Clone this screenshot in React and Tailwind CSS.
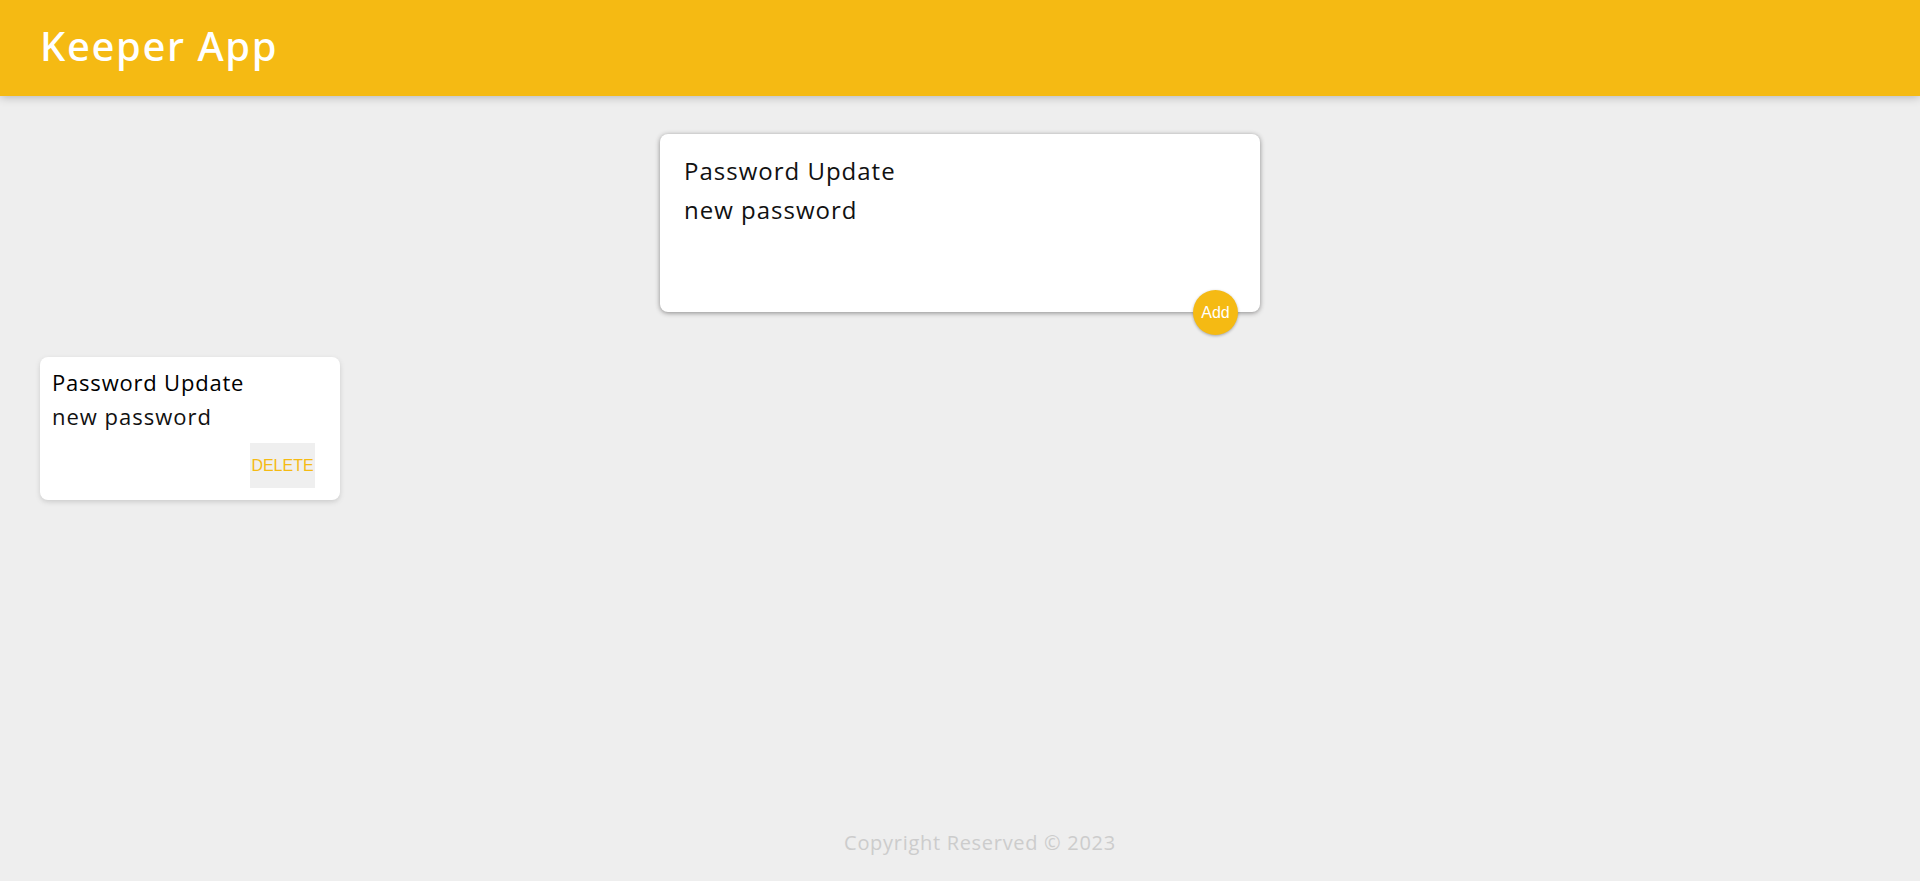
import React from "react";

export default function App() {
  return (
    <div
      className="flex h-[881px] flex-col overflow-hidden bg-[#eeeeee]"
      style={{ fontFamily: '"Open Sans", "Noto Sans", sans-serif' }}
    >
      <header className="relative z-10 h-[96px] shrink-0 bg-[#f5ba13] pl-[40px] pt-[26px] shadow-[0_0_10px_0_rgba(0,0,0,0.3)]">
        <h1
          className="text-[40px] leading-[40px] font-medium tracking-[1.6px] text-white"
          style={{ fontFamily: '"Noto Sans", "Open Sans", sans-serif' }}
        >
          Keeper App
        </h1>
      </header>

      <main className="flex-1">
        <form className="relative mx-auto mt-[38px] h-[178px] w-[600px] rounded-[8px] bg-white pl-[24px] pr-[24px] pt-[17px] shadow-[0_1px_5px_rgb(138,137,137)]">
          <input
            readOnly
            value="Password Update"
            className="block h-[39px] w-full bg-transparent p-0 text-[24px] leading-[39px] font-normal tracking-[1px] text-[#111] outline-none"
          />
          <textarea
            readOnly
            rows={3}
            value="new password"
            className="block h-[100px] w-full resize-none bg-transparent p-0 text-[24px] leading-[39px] font-normal tracking-[1px] text-[#111] outline-none"
          />
          <button
            type="button"
            className="absolute bottom-[-23px] right-[22px] flex h-[45px] w-[45px] items-center justify-center rounded-full bg-[#f5ba13] text-[16px] text-white shadow-[0_1px_3px_rgba(0,0,0,0.3)]"
            style={{ fontFamily: '"Liberation Sans", Arial, sans-serif' }}
          >
            Add
          </button>
        </form>

        <div className="ml-[40px] mt-[45px] flex flex-wrap">
          <div className="flex w-[300px] flex-col rounded-[8px] bg-white px-[12px] pb-[12px] pt-[10px] shadow-[0_2px_5px_#cccccc]">
            <h2 className="text-[22px] leading-[30px] font-medium tracking-[0.8px] text-black">
              Password Update
            </h2>
            <p className="mt-[4px] text-[22px] leading-[30px] font-normal tracking-[1px] text-[#111]">
              new password
            </p>
            <div className="mt-[12px] flex justify-end pr-[13px]">
              <button
                type="button"
                className="h-[45px] w-[65px] bg-[#efefef] p-0 text-[16px] text-[#f5ba13]"
                style={{ fontFamily: '"Liberation Sans", Arial, sans-serif' }}
              >
                DELETE
              </button>
            </div>
          </div>
        </div>
      </main>

      <footer className="h-[53px] shrink-0 pl-[40px] text-center">
        <p className="text-[20px] leading-[30px] tracking-[0.7px] text-[#cccccc]">
          Copyright Reserved © 2023
        </p>
      </footer>
    </div>
  );
}
